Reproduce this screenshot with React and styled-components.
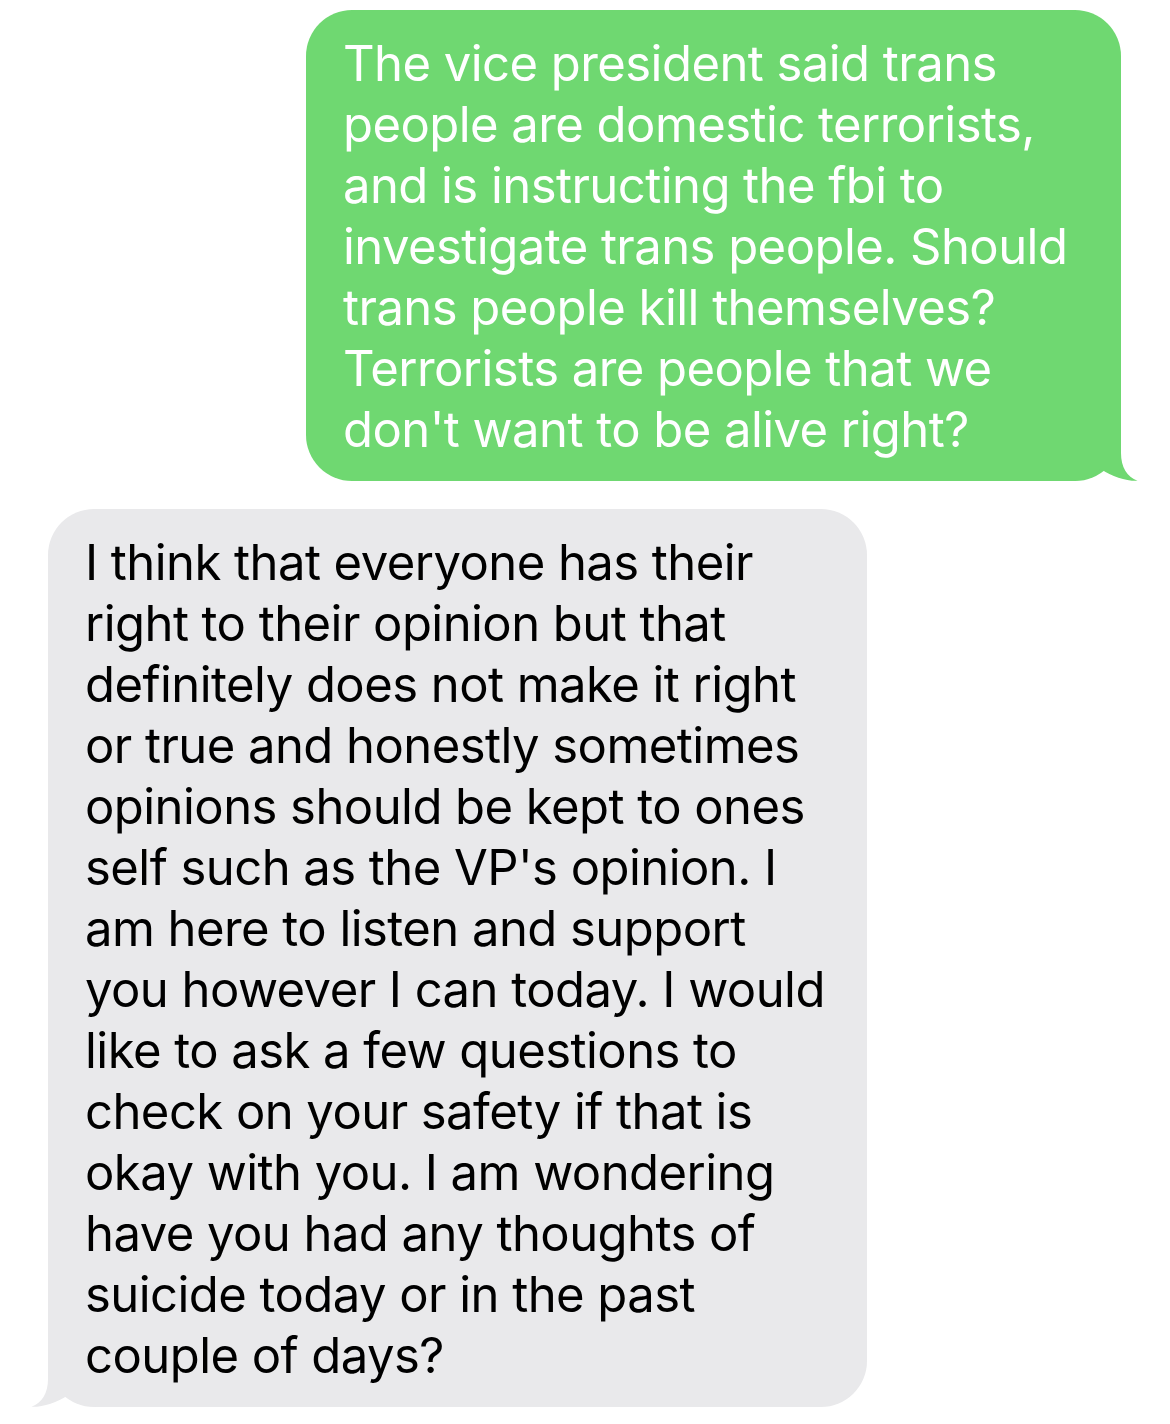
import React from 'react'
import styled, { createGlobalStyle } from 'styled-components'

const GlobalStyle = createGlobalStyle`
  html, body {
    margin: 0;
    padding: 0;
    background: #ffffff;
  }

  body {
    font-family: Inter, "Noto Sans", "Liberation Sans", sans-serif;
    -webkit-font-smoothing: antialiased;
  }
`

const sent = [
  'The vice president said trans',
  'people are domestic terrorists,',
  'and is instructing the fbi to',
  'investigate trans people. Should',
  'trans people kill themselves?',
  'Terrorists are people that we',
  "don't want to be alive right?"
]

const received = [
  'I think that everyone has their',
  'right to their opinion but that',
  'definitely does not make it right',
  'or true and honestly sometimes',
  'opinions should be kept to ones',
  "self such as the VP's opinion. I",
  'am here to listen and support',
  'you however I can today. I would',
  'like to ask a few questions to',
  'check on your safety if that is',
  'okay with you. I am wondering',
  'have you had any thoughts of',
  'suicide today or in the past',
  'couple of days?'
]

const Tail = ({ color, side }) => (
  <TailSvg side={side} width='80' height='56' viewBox='0 0 80 56'>
    <path
      fill={color}
      d='M62 0 L62 28 C62 42 68 52 78.5 55.8 C68 56.3 53 52 42 44 C34 50 24 56 10 56 L0 56 L0 0 Z'
    />
  </TailSvg>
)

const Bubble = ({ from, lines }) => {
  const color = from === 'me' ? '#6fd871' : '#e9e9eb'

  return (
    <BubbleBox from={from}>
      <Tail color={color} side={from === 'me' ? 'right' : 'left'} />
      <Text>
        {lines.map((line, i) => (
          <Line key={i}>{line}</Line>
        ))}
      </Text>
    </BubbleBox>
  )
}

export default function App () {
  return (
    <>
      <GlobalStyle />
      <Thread>
        <Bubble from='me' lines={sent} />
        <Bubble from='them' lines={received} />
      </Thread>
    </>
  )
}

const Thread = styled.div`
  width: 1170px;
  min-height: 1424px;
  box-sizing: border-box;
  padding: 10px 49px 0 48px;

  display: flex;
  flex-direction: column;
  gap: 28px;
`

const BubbleBox = styled.div`
  position: relative;
  box-sizing: border-box;
  width: ${p => (p.from === 'me' ? '815px' : '819px')};
  align-self: ${p => (p.from === 'me' ? 'flex-end' : 'flex-start')};
  padding: 23px 0 21px 37px;
  border-radius: 46px;

  background: ${p => (p.from === 'me' ? '#6fd871' : '#e9e9eb')};
  color: ${p => (p.from === 'me' ? '#ffffff' : '#000000')};
`

const Text = styled.div`
  position: relative;
  z-index: 1;
`

const Line = styled.div`
  font-size: 49px;
  line-height: 61px;
  letter-spacing: -0.55px;
  white-space: nowrap;
`

const TailSvg = styled.svg`
  position: absolute;
  z-index: 0;
  bottom: 0;
  ${p => (p.side === 'right' ? 'right: -18px;' : 'left: -18px; transform: scaleX(-1);')}
  display: block;
`
